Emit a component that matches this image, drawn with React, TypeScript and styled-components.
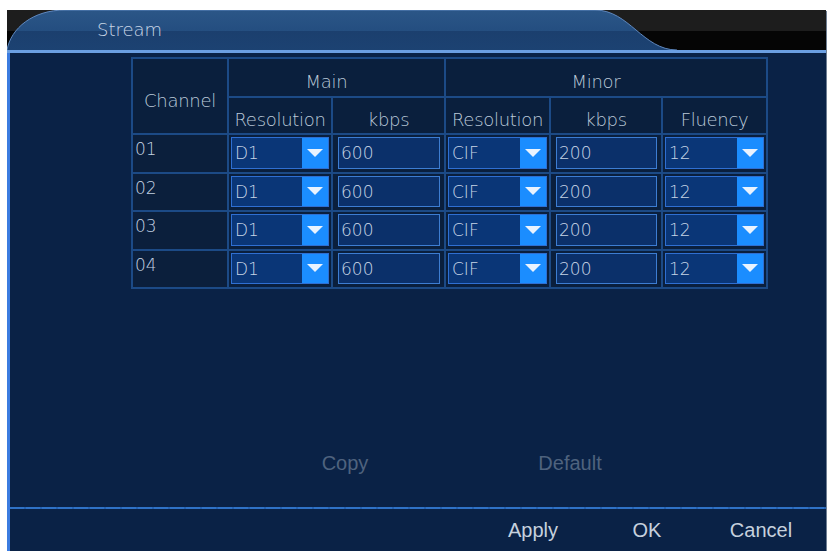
import React from "react";
import styled, { createGlobalStyle } from "styled-components";

const GlobalStyle = createGlobalStyle`
  html, body {
    margin: 0;
    padding: 0;
    background: #ffffff;
  }
  body {
    font-family: "DejaVu Sans", "Liberation Sans", sans-serif;
    font-weight: 300;
  }
`;

const Frame = styled.div`
  margin: 10px 0 0 7px;
  width: 819px;
  height: 541px;
  display: flex;
  flex-direction: column;
  background: #0a2246;
  box-shadow: 1px 1px 0 #6f7f93;
`;

const TopBar = styled.div`
  position: relative;
  height: 40px;
  background: linear-gradient(#1d1d1d 0 52%, #050505 52% 100%);
  display: flex;
  align-items: center;
`;

const TabShape = styled.svg`
  position: absolute;
  left: 0;
  top: 0;
`;

const Title = styled.span`
  position: relative;
  margin-left: 90px;
  margin-top: -2px;
  font-size: 18px;
  color: #c9d6e6;
`;

const Rule = styled.div`
  height: 3px;
  background: #6b9fe2;
`;

const Body = styled.div`
  flex: 1;
  display: flex;
  flex-direction: column;
  border-left: 3px solid #3c7ce0;
`;

const Table = styled.div`
  margin: 4px 0 0 121px;
  align-self: flex-start;
  display: grid;
  grid-template-columns: 94px 102px 111px 103px 110px 103px;
  grid-template-rows: 37px 35px repeat(4, 36.5px);
  background: #1c4a86;
  border: 2px solid #1c4a86;
  gap: 2px;
`;

const HeadCell = styled.div<{ $col?: string; $row?: string; $shift?: number }>`
  grid-column: ${(p) => p.$col || "auto"};
  grid-row: ${(p) => p.$row || "auto"};
  background: #0a1f3d;
  color: #bccada;
  font-size: 18px;
  letter-spacing: -0.3px;
  display: flex;
  align-items: center;
  justify-content: center;
  padding-top: 8px;
  padding-right: ${(p) => p.$shift || 0}px;
  box-sizing: border-box;
`;

const ChannelCell = styled.div`
  background: #0b1f3c;
  color: #c3d1e2;
  font-size: 17px;
  padding: 4px 0 0 2px;
  box-sizing: border-box;
`;

const FieldCell = styled.div`
  background: #0a1f3d;
  padding: 2px 2px 3px 2px;
  box-sizing: border-box;
  display: flex;
`;

const Select = styled.div`
  flex: 1;
  display: flex;
  border: 1px solid #2f6fd2;
  background: #0a3677;
`;

const SelectValue = styled.span`
  flex: 1;
  color: #c7d5e6;
  font-size: 17px;
  padding: 5px 0 0 3px;
`;

const Arrow = styled.span`
  width: 26px;
  background: #1b8dff;
  display: flex;
  align-items: center;
  justify-content: center;
  &::after {
    content: "";
    border-left: 8px solid transparent;
    border-right: 8px solid transparent;
    border-top: 8px solid #e9f3ff;
  }
`;

const Input = styled.div`
  flex: 1;
  margin: 0 2px 0 3px;
  border: 1px solid #3d7dd2;
  background: #0b306a;
  color: #c7d5e6;
  font-size: 17px;
  padding: 5px 0 0 2px;
`;

const Spacer = styled.div`
  flex: 1;
`;

const ActionRow = styled.div`
  display: grid;
  grid-template-columns: 120px 120px;
  column-gap: 105px;
  margin: 0 0 28px 275px;
`;

const FooterRow = styled.div`
  height: 42px;
  display: flex;
  justify-content: flex-end;
  padding-right: 8px;
`;

const TextButton = styled.div<{ $dim?: boolean }>`
  height: ${(p) => (p.$dim ? "32px" : "42px")};
  width: ${(p) => (p.$dim ? "auto" : "114px")};
  display: flex;
  align-items: center;
  justify-content: center;
  font-family: "Liberation Sans", "DejaVu Sans", sans-serif;
  font-weight: 400;
  font-size: 20px;
  color: ${(p) => (p.$dim ? "#4f637e" : "#c6d1de")};
`;

const Separator = styled.div`
  height: 2px;
  background: repeating-linear-gradient(90deg, #2f72c6 0 14px, #2562b2 14px 16px);
`;

type Row = { ch: string; mainRes: string; mainKbps: string; minRes: string; minKbps: string; fps: string };

const rows: Row[] = ["01", "02", "03", "04"].map((ch) => ({
  ch,
  mainRes: "D1",
  mainKbps: "600",
  minRes: "CIF",
  minKbps: "200",
  fps: "12",
}));

const Dropdown = ({ value }: { value: string }) => (
  <FieldCell>
    <Select>
      <SelectValue>{value}</SelectValue>
      <Arrow />
    </Select>
  </FieldCell>
);

const NumberField = ({ value }: { value: string }) => (
  <FieldCell>
    <Input>{value}</Input>
  </FieldCell>
);

export default function App() {
  return (
    <>
      <GlobalStyle />
      <Frame>
        <TopBar>
          <TabShape width="819" height="40" viewBox="0 0 819 40">
            <defs>
              <linearGradient id="tabFill" x1="0" y1="0" x2="0" y2="1">
                <stop offset="0" stopColor="#2b5687" />
                <stop offset="0.52" stopColor="#244e80" />
                <stop offset="0.53" stopColor="#1b3f6e" />
                <stop offset="1" stopColor="#1c4272" />
              </linearGradient>
            </defs>
            <path
              d="M0 40 C4 18 26 0 58 0 L588 0 C622 0 636 40 670 40 Z"
              fill="url(#tabFill)"
            />
            <path
              d="M0 40 C4 18 26 0 58 0 L588 0 C622 0 636 40 670 40"
              fill="none"
              stroke="#5f88bf"
              strokeWidth="1"
            />
          </TabShape>
          <Title>Stream</Title>
        </TopBar>
        <Rule />
        <Body>
          <Table>
            <HeadCell $row="1 / span 2">Channel</HeadCell>
            <HeadCell $col="2 / span 2" $shift={20}>Main</HeadCell>
            <HeadCell $col="4 / span 3" $shift={20}>Minor</HeadCell>
            <HeadCell $col="2" $row="2">Resolution</HeadCell>
            <HeadCell $col="3" $row="2">kbps</HeadCell>
            <HeadCell $col="4" $row="2">Resolution</HeadCell>
            <HeadCell $col="5" $row="2">kbps</HeadCell>
            <HeadCell $col="6" $row="2">Fluency</HeadCell>
            {rows.map((r) => (
              <React.Fragment key={r.ch}>
                <ChannelCell>{r.ch}</ChannelCell>
                <Dropdown value={r.mainRes} />
                <NumberField value={r.mainKbps} />
                <Dropdown value={r.minRes} />
                <NumberField value={r.minKbps} />
                <Dropdown value={r.fps} />
              </React.Fragment>
            ))}
          </Table>
          <Spacer />
          <ActionRow>
            <TextButton $dim>Copy</TextButton>
            <TextButton $dim>Default</TextButton>
          </ActionRow>
          <Separator />
          <FooterRow>
            <TextButton>Apply</TextButton>
            <TextButton>OK</TextButton>
            <TextButton>Cancel</TextButton>
          </FooterRow>
        </Body>
      </Frame>
    </>
  );
}
